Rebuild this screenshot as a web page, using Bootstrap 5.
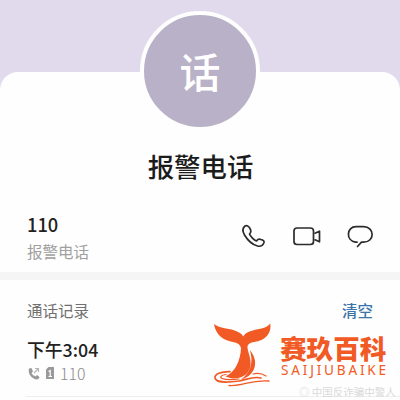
<!DOCTYPE html>
<html lang="zh-CN">
<head>
<meta charset="utf-8">
<meta name="viewport" content="width=device-width, initial-scale=1">
<title>报警电话</title>
<link href="https://cdn.jsdelivr.net/npm/bootstrap@5.3.0/dist/css/bootstrap.min.css" rel="stylesheet">
<style>
body{font-family:"Noto Sans CJK SC",sans-serif;background:#e1daec;color:#222;width:400px;height:400px;line-height:1}
.hero{height:72px}
.sheet{height:328px;border-radius:18px 18px 0 0;background:#fefefe}
.face{width:120px;height:120px;border:4.5px solid #fefefe;background:#b9b1c7;font-size:41px;font-weight:500;margin-top:-61px;flex:none;padding-bottom:1px}
.title{font-size:26.4px;font-weight:500;line-height:30px;margin-top:20px;height:30px;color:#1c1c1c;padding-left:1px}
.contact{height:91px;padding:29px 26px 0 27px}
.num{font-size:18.3px;font-weight:500;line-height:18px;margin-top:1px}
.sub{font-size:15.5px;color:#a0a0a0;line-height:18px;margin-top:9px}
.acts{margin-top:7px}
.band{height:8px;background:#f5f5f5}
.log{padding:20px 27px 0 27px}
.caption-row{font-size:15.5px;line-height:20px}
.gray{color:#707070}
.clear{color:#3a74ab;font-weight:500}
.time{font-size:17.8px;font-weight:500;line-height:20px;margin-top:19px}
.meta{font-size:15.8px;font-weight:300;line-height:18px;color:#8c8c8c;margin-top:6px;height:18px}
.rule{height:1px;background:#eee;margin:13px 0 0 26px}
.brand{left:212px;top:319px;color:#f15a24}
.brand-name{font-size:26.6px;font-weight:900;line-height:28px;margin-top:15px}
.brand-latin{font-family:"Noto Sans",sans-serif;font-size:13.6px;letter-spacing:2.8px;line-height:14px;margin:1px 0 0 1px;white-space:nowrap}
.credit{left:299px;top:386px;font-size:10.5px;line-height:12px;color:#dadada;white-space:nowrap}
</style>
<script src="https://cdn.jsdelivr.net/npm/bootstrap@5.3.0/dist/js/bootstrap.bundle.min.js"></script>
</head>
<body class="position-relative overflow-hidden">
<div class="hero"></div>
<main class="sheet d-flex flex-column">
  <div class="face rounded-circle text-white d-flex align-items-center justify-content-center align-self-center">话</div>
  <div class="title text-center">报警电话</div>
  <section class="contact d-flex justify-content-between align-items-start">
    <div class="pt-1"><div class="num">110</div><div class="sub">报警电话</div></div>
    <svg class="acts" width="134" height="40" viewBox="240 217 134 40" fill="none" stroke="#2b2b2b" stroke-width="1.7" stroke-linejoin="round" stroke-linecap="round">
      <path d="M245 226C242.500 228 242.500 231.500 244.500 235C247.500 240 252 244.500 257.500 246C260.500 246.800 263 245 264 242.500C264.500 241 263 240 261 239.500C259 238.800 257.500 239.500 256.500 241C254 240 250.500 236.500 249.500 234C251 232.500 251.500 231 250 228.500C248.700 226 246.800 225 245 226Z"/>
      <rect x="294" y="228" width="19.500" height="16.500" rx="3"/>
      <path d="M315 233.200L319.500 231.200V241.800L315 239.800"/>
      <path d="M357 242.200H355.500C345.500 240.500 346.500 226.600 356 226.600H363.500C375 226.600 375 242.200 363.500 242.200H361.500L357.500 246.500"/>
    </svg>
  </section>
  <div class="band"></div>
  <section class="log">
    <div class="caption-row d-flex justify-content-between"><span class="gray">通话记录</span><span class="clear">清空</span></div>
    <div class="time">下午3:04</div>
    <div class="meta d-flex align-items-center">
      <svg width="33" height="16" viewBox="27 367 33 16">
        <path d="M29 369.500L31.500 369L33 372.500L31.500 374.200Q33 377 35.500 377.500L37 376L39.500 378Q39 380.500 36.500 380.500C31.500 379.500 27.500 374.500 29 369.500Z" fill="#999"/>
        <path d="M34 374L38 370M35 369.500H38.500V373" fill="none" stroke="#b5b5b5" stroke-width="1.100"/>
        <path d="M46 370.500L48.500 368H54V380H46Z" fill="#999"/>
        <path d="M48.500 372.500L50.200 371.500V377.500M48.500 377.500H52" fill="none" stroke="#fff" stroke-width="1.200"/>
      </svg><span>110</span>
    </div>
  </section>
  <div class="rule"></div>
</main>
<div class="brand position-absolute d-flex">
  <svg width="68" height="72" viewBox="212 319 68 72" fill="currentColor">
    <path d="M214 324C220 329 229 328 236 331C240 333 242 334 243.200 336.500C244.500 334 247 332 251 331C258 328.500 266 329 270.300 323.500C271.500 332 267 338 260 340.500C255 342.500 249.500 341.500 247.500 346C247 351 251.500 358 250.500 365C250 373 243 379 232 378.500L225.500 376.500C235 372 240.500 361 241 348C239.500 341.500 232 342.500 226 340C219 337 215 331 214 324Z"/>
    <path d="M249.800 350C256 357 256.500 365 253 371C250.500 375.500 246 378 241 379.500C250 373 254 363 249.800 350Z"/>
    <g fill="none" stroke="currentColor" stroke-linecap="round">
      <path d="M230 371.700C221 371.500 214.500 374 215 378C216 383 229 382.500 239 381C247 379.500 253 376 261 378" stroke-width="1.700"/>
      <path d="M226 374.500C220.500 375 219.500 377.500 222 378.500C226 380 233 379.800 239 379" stroke-width="1.200"/>
      <path d="M229 385.500C243 386.500 250 379.500 269 381" stroke-width="1.300"/>
      <path d="M253 374C258 372.800 262 373.500 266 376" stroke-width="1.200"/>
    </g>
  </svg>
  <div><div class="brand-name">赛玖百科</div><div class="brand-latin">SAIJIUBAIKE</div></div>
</div>
<div class="credit position-absolute">◎ 中国反诈骗中警人</div>
</body>
</html>
